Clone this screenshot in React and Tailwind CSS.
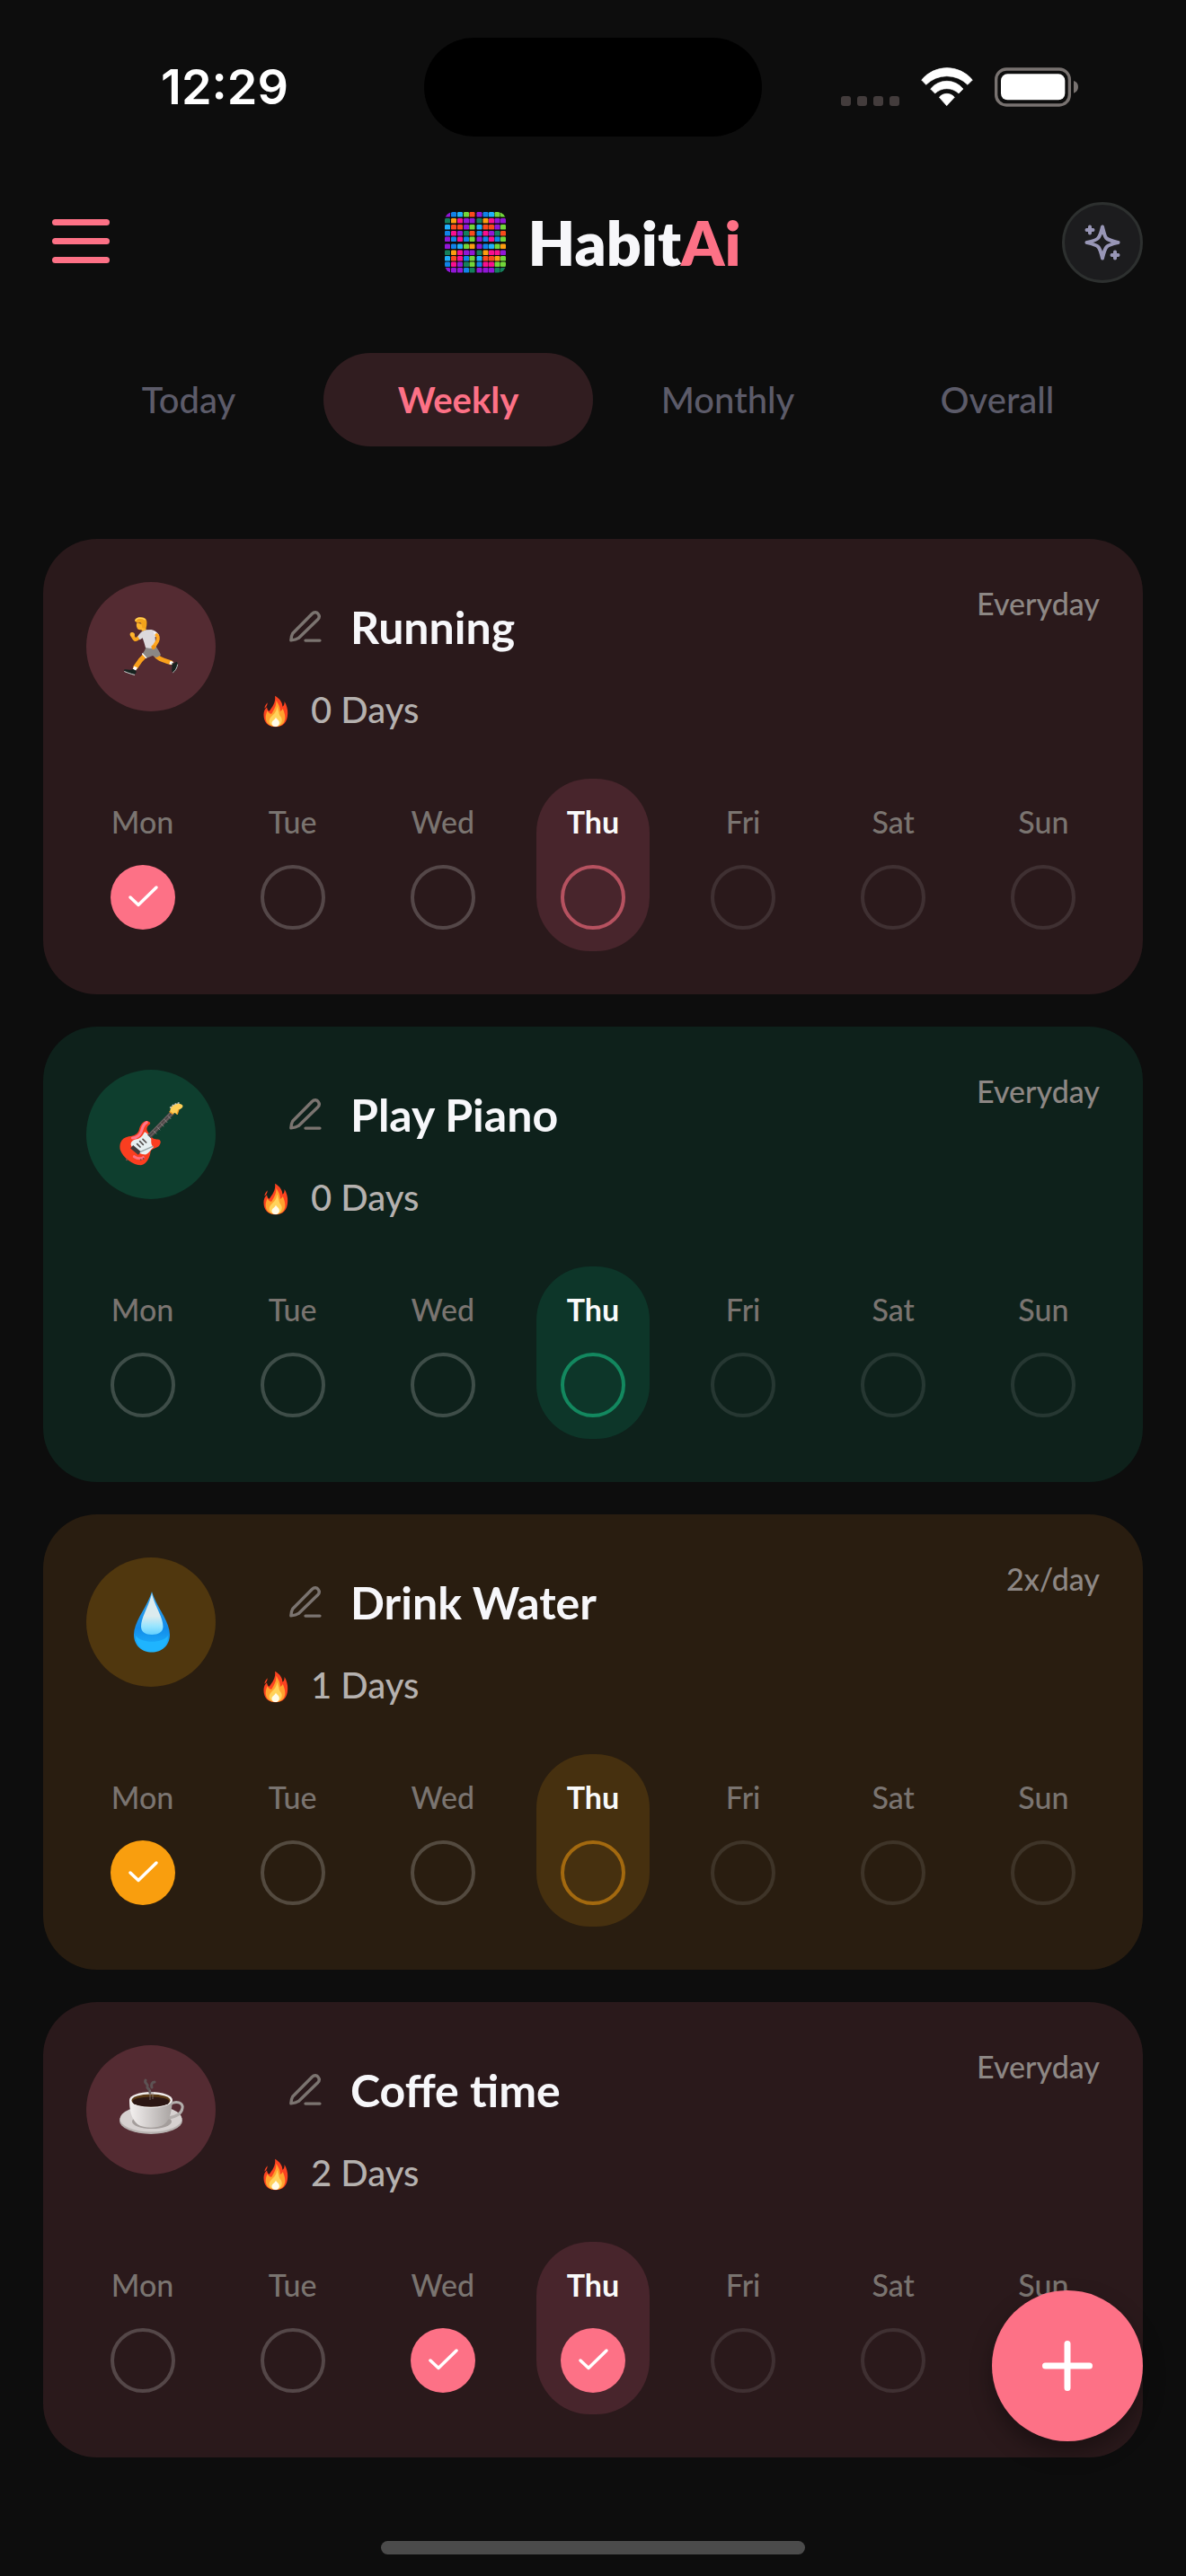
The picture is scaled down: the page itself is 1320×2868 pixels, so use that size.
import React, { useState } from 'react'
import clsx from 'clsx'

const DAYS = ['Mon', 'Tue', 'Wed', 'Thu', 'Fri', 'Sat', 'Sun']
const TODAY = 3
const TABS = ['Today', 'Weekly', 'Monthly', 'Overall']

const THEMES = {
  rose: {
    card: 'bg-[#2a191b]',
    icon: 'bg-[#542b32]',
    today: 'bg-[#48252c]',
    ring: 'border-[#b65260]',
    done: 'checked:bg-[#fd7186]'
  },
  green: {
    card: 'bg-[#0e211b]',
    icon: 'bg-[#0e3e2e]',
    today: 'bg-[#0d3629]',
    ring: 'border-[#13885f]',
    done: 'checked:bg-[#10b981]'
  },
  amber: {
    card: 'bg-[#291d10]',
    icon: 'bg-[#50370e]',
    today: 'bg-[#46300f]',
    ring: 'border-[#a3690f]',
    done: 'checked:bg-[#f99e0e]'
  }
}

const HABITS = [
  { id: 'running', name: 'Running', theme: 'rose', Icon: RunnerIcon, streak: 0, repeat: 'Everyday', done: [0] },
  { id: 'piano', name: 'Play Piano', theme: 'green', Icon: GuitarIcon, streak: 0, repeat: 'Everyday', done: [] },
  { id: 'water', name: 'Drink Water', theme: 'amber', Icon: DropIcon, streak: 1, repeat: '2x/day', done: [0] },
  { id: 'coffee', name: 'Coffe time', theme: 'rose', Icon: CoffeeIcon, streak: 2, repeat: 'Everyday', done: [2, 3] }
]

const LOGO_COLORS = {
  P: '#9117d6', B: '#1182e8', C: '#1fb0fb', G: '#72d63a',
  O: '#fa4a1c', T: '#15805c', Y: '#fc9d10', M: '#f90f8e'
}
const LOGO_ROWS = [
  'PBCGOPBCGG', 'TYMPPTYMPP', 'COOPGCOOPG', 'BMPTOBMPTO', 'PBMBGPBMBG',
  'PBCGYPBCGY', 'TYMPPTYMMP', 'COMBGCOOYG', 'BMPTGBMMGG', 'PPPBTPPPTT'
]
const LOGO_STEPS = [0, 7, 14, 21, 27.5, 35.5, 42.5, 49, 55.5, 62]

function Logo() {
  return (
    <svg viewBox="0 0 68 68" className="size-17" aria-hidden="true">
      <clipPath id="logo-clip"><rect width="68" height="68" rx="9" /></clipPath>
      <g clipPath="url(#logo-clip)">
        {LOGO_ROWS.map((row, y) => [...row].map((c, x) => (
          <rect key={`${x}-${y}`} x={LOGO_STEPS[x]} y={LOGO_STEPS[y]} width="6" height="5.6" rx="1.2" fill={LOGO_COLORS[c]} />
        )))}
      </g>
    </svg>
  )
}

function WifiIcon() {
  return (
    <svg viewBox="314 44 174 130" className="h-11 w-[58px]" fill="#fff" stroke="#fff" strokeWidth="2" strokeLinejoin="round" aria-hidden="true">
      <path d="M316 85A110 110 0 0 1 486 85L470 101A98 98 0 0 0 331 101Z" />
      <path d="M346 115A70 70 0 0 1 455 115L440 130A57 57 0 0 0 361 130Z" />
      <path d="M375 143A33 33 0 0 1 426 143L400 171Z" />
    </svg>
  )
}

function BatteryIcon() {
  return (
    <svg viewBox="555 44 279 132" className="h-11 w-[93px]" aria-hidden="true">
      <rect x="560" y="50" width="245" height="120" rx="34" fill="none" stroke="#787270" strokeWidth="10" />
      <rect x="576" y="66" width="214" height="87" rx="22" fill="#fff" />
      <path d="M819 89C829 92 834 100 834 109.500C834 119 829 127 819 130Z" fill="#787270" />
    </svg>
  )
}

function SparkleIcon() {
  return (
    <svg viewBox="0 0 40 40" className="size-10" fill="none" stroke="#9896b6" strokeWidth="4" strokeLinecap="round" strokeLinejoin="round" aria-hidden="true">
      <path d="M20 2.500C21.600 9 22.300 13 24.200 15C26.500 17.500 31 18.500 37.500 20C31 21.500 26.500 22.500 24.800 24.800C22.500 27 21.600 31 20 37.500C18.400 31 17.500 27 15.200 24.800C13.500 22.500 9 21.500 2.500 20C9 18.500 13.500 17.500 15.200 15C17.500 13 18.400 9 20 2.500Z" />
      <path d="M6 2.500V9.500M2.500 6H9.500M34 30.500V37.500M30.500 34H37.500" />
    </svg>
  )
}

function PencilIcon() {
  return (
    <svg viewBox="0 0 35 35" className="size-9" fill="none" stroke="#7b7470" strokeWidth="3.300" strokeLinecap="round" strokeLinejoin="round" aria-hidden="true">
      <path d="M1.800 32C1.900 29.600 2.500 26.500 3.600 24.500L24.500 3.400C27.200 .8 30 1.600 31.200 3.400C32.800 5.500 32.500 7.600 31 9.200L10 29.600C8 31 4.500 31.800 1.800 32Z" />
      <path d="M17.500 32.200H33" />
    </svg>
  )
}

function FlameIcon() {
  return (
    <svg viewBox="608 406 90 112" className="h-9 w-[30px]" aria-hidden="true">
      <path d="M650 408C668 418 676 432 676 446C682 443 683 436 683 428C690 440 695 455 694 470C693 500 678 516 652 516C626 516 611 500 611 474C611 462 615 453 622 447C623 455 626 459 630 461C640 448 654 430 650 408Z" fill="#fc4320" />
      <path d="M624 432C619 438 614 444 614 452C620 447 624 441 624 432Z" fill="#fc4320" />
      <path d="M654 424C662 438 668 446 668 462C673 460 676 456 677 452C685 470 688 486 682 498C676 511 664 515 652 515C634 515 620 506 618 488C617 477 620 468 624 460C628 468 634 472 639 470C646 456 656 444 654 424Z" fill="#ffa22e" />
      <path d="M657 446C664 462 663 472 668 478C676 486 676 498 668 507C661 514 644 515 635 507C627 499 630 488 637 481C646 472 656 464 657 446Z" fill="#ffd25a" />
      <path d="M653 482C656 490 666 492 665 503C664 512 658 515 651 515C643 515 638 509 639 501C641 492 650 492 653 482Z" fill="#fffbe9" />
    </svg>
  )
}

function RunnerIcon() {
  return (
    <svg viewBox="18 24 432 432" className="size-36" strokeLinecap="round" strokeLinejoin="round" aria-hidden="true">
      {/* far arm */}
      <path d="M200 203C192 212 187 217 181 216C176 212 175 208 172 203" fill="none" stroke="#f9a51d" strokeWidth="12" />
      <path d="M164 197C165 191 174 190 179 196C182 203 178 208 171 207C166 205 163 202 164 197Z" fill="#ffb52e" />
      {/* back leg */}
      <path d="M250 268C258 282 276 285 300 293" fill="none" stroke="#f9a01b" strokeWidth="15" />
      <path d="M299 287L309 291L305 301L295 298Z" fill="#fff" />
      <path d="M305 293C310 300 314 294 318 290C325 290 324 302 319 312C315 321 310 327 306 325C301 322 306 312 304 304Z" fill="#17221f" />
      <path d="M323 300C321 312 314 322 308 326" fill="none" stroke="#b9c2c0" strokeWidth="3" />
      {/* front leg */}
      <path d="M217 266C199 282 193 291 183 308" fill="none" stroke="#f9a01b" strokeWidth="16" />
      <path d="M178 305L189 310L183 320L173 315Z" fill="#fff" />
      <path d="M144 317C152 314 164 320 175 315L184 320C187 326 182 332 177 333C164 331 150 326 144 320Z" fill="#17221f" />
      <path d="M146 323C157 327 166 331 179 334" fill="none" stroke="#d2d6d5" strokeWidth="3" />
      {/* shorts */}
      <path d="M218 240L251 240C256 247 264 258 267 268L252 277L240 270L217 279L205 264C211 258 215 250 218 240Z" fill="#8b8785" />
      <path d="M206 264L218 277" stroke="#fff" strokeWidth="4" />
      {/* shirt */}
      <path d="M190 206C196 194 206 187 216 184L235 183C246 185 255 192 260 200L248 207L250 242C240 247 225 245 216 243C213 232 210 221 206 211L197 217Z" fill="#dcd9dc" />
      <path d="M242 188C250 190 256 195 260 200L248 207Z" fill="#f7f5f8" />
      {/* near arm */}
      <path d="M253 201C258 205 259 212 255 222L245 238" fill="none" stroke="#ffa61f" strokeWidth="12" />
      <path d="M235 240C236 234 248 233 250 240C250 248 243 251 238 248Z" fill="#f29716" />
      {/* head */}
      <path d="M187 160C184 168 186 173 188 178C191 184 197 185 202 183L204 188L218 184L216 168Z" fill="#ffb52e" />
      <path d="M181 155C180 145 191 140 204 142C216 143 222 152 220 164C220 172 218 177 215 180L205 177C204 170 203 164 199 160C193 161 186 160 181 155Z" fill="#f2a21b" />
      <path d="M183 152C186 144 202 142 214 149" fill="none" stroke="#ffd057" strokeWidth="5" />
    </svg>
  )
}

function GuitarIcon() {
  return (
    <svg viewBox="-12 -27 432 432" className="size-36" strokeLinecap="round" strokeLinejoin="round" aria-hidden="true">
      <path d="M190 144C202 146 205 152 198 157C189 164 188 174 194 181L207 199C214 207 226 205 233 207C240 213 235 226 225 232C215 237 206 238 203 246C200 265 191 288 171 292C145 292 110 267 101 239C97 216 108 200 130 196C149 194 160 188 164 175C168 158 176 145 190 144Z" fill="#fa3e20" />
      <path d="M190 149C176 156 176 170 171 181C166 193 158 200 142 201" fill="none" stroke="#ff7489" strokeWidth="9" />
      <path d="M148 263C158 270 168 272 178 266" fill="none" stroke="#ff6f80" strokeWidth="9" />
      <path d="M183 181C192 185 203 196 205 206C204 217 206 227 213 231C202 240 195 258 181 256C165 254 143 239 137 224C136 211 147 206 160 204C171 201 177 191 183 181Z" fill="#e7f0f1" />
      <path d="M198 196L277 115" stroke="#4e4747" strokeWidth="16" strokeLinecap="butt" />
      <path d="M196 190L272 113M202 196L278 119" stroke="#8c8785" strokeWidth="2" />
      <path d="M213 177L222 187M225 164L234 174M237 152L246 162M249 139L258 149M261 127L270 137" stroke="#a39d9c" strokeWidth="2" />
      <path d="M158 221L168 231M167 212L178 223M177 205L188 216" stroke="#55504f" strokeWidth="5" />
      <path d="M140 230L166 252" stroke="#403b3b" strokeWidth="14" strokeLinecap="butt" />
      <path d="M169 247L210 229" stroke="#99a5a7" strokeWidth="4" />
      <path d="M268 108C270 99 273 94 280 91C285 85 303 84 310 92C312 99 305 102 299 106C294 109 295 116 292 123L284 117L276 121L267 115Z" fill="#ffcf58" />
      <path d="M267 113L276 120M292 121L296 108" stroke="#f49b1d" strokeWidth="4" />
      <path d="M269 99L278 91L288 87L299 83" stroke="#c6c5c2" strokeWidth="5" fill="none" strokeDasharray="2 8" />
      <circle cx="170" cy="274" r="3" fill="#7d4b4a" />
      <circle cx="179" cy="270" r="3" fill="#7d4b4a" />
      <circle cx="123" cy="274" r="3" fill="#7d4b4a" />
    </svg>
  )
}

function DropIcon() {
  return (
    <svg viewBox="0 0 144 144" className="size-36" aria-hidden="true">
      <defs>
        <linearGradient id="drop-body" x1="0" y1="0" x2="0" y2="1">
          <stop offset="0" stopColor="#3ba6ec" />
          <stop offset=".6" stopColor="#118be9" />
          <stop offset="1" stopColor="#20b7ff" />
        </linearGradient>
        <linearGradient id="drop-shine" x1="0" y1="0" x2="0" y2="1">
          <stop offset=".55" stopColor="#dcebee" />
          <stop offset=".8" stopColor="#96e4ff" />
          <stop offset="1" stopColor="#62d0ff" />
        </linearGradient>
      </defs>
      <path d="M73 38C78 55 93 71 93 86C93 98 84 105.500 73 105.500C62 105.500 53 98 53 86C53 71 68 55 73 38Z" fill="url(#drop-body)" />
      <path d="M55 87C61 96 85 96 91 87C91 98 83 104 73 104C63 104 55 98 55 87Z" fill="#1fb4fe" />
      <path d="M73 40C76 54 85.500 66 85.500 77C85.500 83 80 86 73 86C66 86 61 83 61 77C61 66 70 54 73 40Z" fill="url(#drop-shine)" />
    </svg>
  )
}

function CoffeeIcon() {
  return (
    <svg viewBox="0 0 144 144" className="size-36" aria-hidden="true">
      <defs>
        <linearGradient id="cup-body" x1="0" y1="0" x2="1" y2="0">
          <stop offset="0" stopColor="#f4f1f0" />
          <stop offset=".35" stopColor="#dad6d5" />
          <stop offset="1" stopColor="#a8a3a1" />
        </linearGradient>
      </defs>
      <ellipse cx="72" cy="84" rx="35" ry="15" fill="#b7b2b0" />
      <ellipse cx="72" cy="82" rx="34.500" ry="14.500" fill="#d6d1d0" />
      <ellipse cx="73" cy="85" rx="22" ry="8" fill="#a39d9b" />
      <path d="M93 66C100 61 108 64 107 70C106 77 99 80 91 81" fill="none" stroke="#b3aeac" strokeWidth="3" />
      <path d="M48 61C48 72 50 82 57 88C64 93 80 93 87 88C94 82 95 72 96 61Z" fill="url(#cup-body)" />
      <ellipse cx="72" cy="61" rx="24" ry="9" fill="#f0edec" />
      <ellipse cx="72" cy="61.500" rx="21.500" ry="7" fill="#5a3a16" />
      <ellipse cx="72" cy="63" rx="20.500" ry="5.600" fill="#2c1714" />
      <path d="M66 39C64 43 69 42 68 46C67 49 71 47 71 53M76 41C73 41 72 44 73 47" fill="none" stroke="#5d5354" strokeWidth="3" strokeLinecap="round" />
      <path d="M71 50V61M74 52V60" stroke="#8c8080" strokeOpacity=".5" strokeWidth="1.500" />
    </svg>
  )
}

function StatusBar() {
  return (
    <div className="grid h-[195px] grid-cols-3 items-start pt-[42px]">
      <time className="ml-15 text-center font-[Inter,sans-serif] text-[54px]/[110px] font-semibold text-white">12:29</time>
      <div className="mx-auto h-[110px] w-[376px] rounded-[55px] bg-black" />
      <div className="mr-30 flex h-[110px] items-center justify-end gap-6">
        <div className="flex gap-[7px] pt-[30px]">
          {[0, 1, 2, 3].map(i => <span key={i} className="size-[11px] rounded-[3px] bg-[#433c3c]" />)}
        </div>
        <WifiIcon />
        <BatteryIcon />
      </div>
    </div>
  )
}

function DayCheck({ habit, theme, day, index, checked, onToggle }) {
  const isToday = index === TODAY
  return (
    <label
      className={clsx(
        'flex w-[126px] flex-col items-center gap-6 rounded-[60px] py-6',
        isToday && theme.today
      )}
    >
      <span className={clsx('text-[34px]/[48px]', isToday ? 'font-bold text-[#fafafa]' : 'font-medium text-[#7a7470]')}>{day}</span>
      <span className="grid size-18 place-items-center">
        <input
          type="checkbox"
          className={clsx(
            'peer col-start-1 row-start-1 size-18 appearance-none rounded-full border-4 checked:border-0',
            theme.done,
            isToday ? theme.ring : index < TODAY ? 'border-white/20' : 'border-white/10'
          )}
          checked={checked}
          disabled={index > TODAY}
          onChange={onToggle}
          aria-label={`${habit} ${day}`}
        />
        <svg viewBox="0 0 72 72" className="pointer-events-none invisible col-start-1 row-start-1 size-18 peer-checked:visible" aria-hidden="true">
          <path d="M22 36L31 44.500L51 25" fill="none" stroke="#fff" strokeWidth="3.500" strokeLinecap="round" strokeLinejoin="round" />
        </svg>
      </span>
    </label>
  )
}

function HabitCard({ habit }) {
  const theme = THEMES[habit.theme]
  const [done, setDone] = useState(habit.done)

  const toggle = i => setDone(prev => prev.includes(i) ? prev.filter(d => d !== i) : [...prev, i])

  return (
    <article className={clsx('rounded-[60px] py-12', theme.card)}>
      <div className="flex h-[219px] items-start px-12">
        <div className={clsx('size-36 shrink-0 rounded-full', theme.icon)}>
          <habit.Icon />
        </div>
        <div className="ml-12 flex-1 pt-[18px]">
          <div className="flex items-center gap-8 pl-[34px]">
            <button aria-label={`Edit ${habit.name}`}><PencilIcon /></button>
            <h2 className="text-[50px]/[64px] font-bold text-[#f7f7fa]">{habit.name}</h2>
          </div>
          <div className="mt-7 flex items-center gap-6 pl-1">
            <div className="pt-1"><FlameIcon /></div>
            <p className="text-[40px]/[64px] font-medium text-[#b5b1af]">{habit.streak} Days</p>
          </div>
        </div>
        <p className="text-[34px]/[48px] font-medium text-[#8d8784]">{habit.repeat}</p>
      </div>
      <div className="grid grid-cols-7 justify-items-center px-[27px]">
        {DAYS.map((day, i) => (
          <DayCheck
            key={day}
            habit={habit.name}
            theme={theme}
            day={day}
            index={i}
            checked={done.includes(i)}
            onToggle={() => toggle(i)}
          />
        ))}
      </div>
    </article>
  )
}

export default function App() {
  const [tab, setTab] = useState('Weekly')

  return (
    <div className="flex min-h-screen flex-col bg-[#0d0d0d] font-[Lato,sans-serif]">
      <StatusBar />

      <header className="flex h-[150px] items-center justify-between px-12">
        <button aria-label="Menu" className="flex w-[90px] flex-col gap-[14px] pb-1 pl-[10px]">
          <span className="h-[7px] w-16 rounded-full bg-[#fd7186]" />
          <span className="h-[7px] w-16 rounded-full bg-[#fd7186]" />
          <span className="h-[7px] w-16 rounded-full bg-[#fd7186]" />
        </button>
        <div className="flex items-center gap-6">
          <Logo />
          <h1 className="text-[68px]/[80px] font-extrabold text-[#f7f7fa]">Habit<span className="text-[#fd7186]">Ai</span></h1>
        </div>
        <button aria-label="AI suggestions" className="flex size-[90px] items-center justify-center rounded-full border-3 border-[#2d302f] bg-[#1c1c1e]">
          <SparkleIcon />
        </button>
      </header>

      <nav role="tablist" className="mt-12 grid grid-cols-4 px-15">
        {TABS.map(t => (
          <button
            key={t}
            role="tab"
            aria-selected={t === tab}
            onClick={() => setTab(t)}
            className={clsx(
              'h-26 rounded-[52px] text-[40px]',
              t === tab ? 'bg-[#311d20] font-bold text-[#fd7186]' : 'font-medium text-[#5c5b69]'
            )}
          >
            {t}
          </button>
        ))}
      </nav>

      <main className="mt-[103px] flex flex-col gap-9 px-12">
        {HABITS.map(h => <HabitCard key={h.id} habit={h} />)}
      </main>

      <div className="mx-auto mt-auto mb-6 h-[15px] w-[472px] rounded-full bg-[#4b4b4b]" />

      <button
        aria-label="Add habit"
        className="fixed right-12 bottom-[150px] flex size-42 items-center justify-center rounded-full bg-[#fd7186] shadow-[0_12px_24px_rgba(0,0,0,0.35)]"
      >
        <svg viewBox="0 0 56 56" className="size-14" aria-hidden="true">
          <path d="M28 3.500V52.500M3.500 28H52.500" stroke="#fff" strokeWidth="7" strokeLinecap="round" />
        </svg>
      </button>
    </div>
  )
}
